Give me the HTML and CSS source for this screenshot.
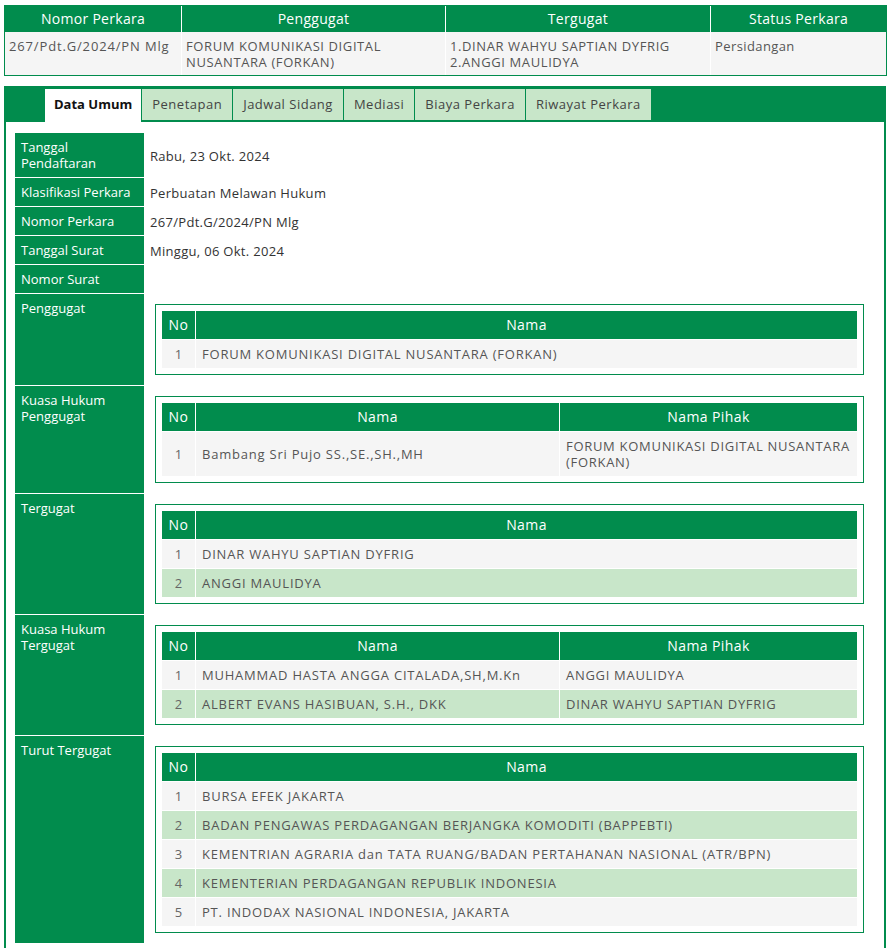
FILE: index.html
```html
<!DOCTYPE html>
<html lang="id">
<head>
<meta charset="utf-8">
<title>Detil Perkara</title>
<link rel="stylesheet" href="styles.css">
</head>
<body>
<table class="summary">
  <colgroup>
    <col class="s1"><col class="s2"><col class="s3"><col class="s4">
  </colgroup>
  <thead>
    <tr><th>Nomor Perkara</th><th>Penggugat</th><th>Tergugat</th><th>Status Perkara</th></tr>
  </thead>
  <tbody>
    <tr>
      <td class="num">267/Pdt.G/2024/PN Mlg</td>
      <td class="caps">FORUM KOMUNIKASI DIGITAL NUSANTARA (FORKAN)</td>
      <td class="caps">1.DINAR WAHYU SAPTIAN DYFRIG<br>2.ANGGI MAULIDYA</td>
      <td>Persidangan</td>
    </tr>
  </tbody>
</table>

<div class="panel">
  <div class="tabs">
    <div class="tab active">Data Umum</div>
    <div class="tab">Penetapan</div>
    <div class="tab">Jadwal Sidang</div>
    <div class="tab">Mediasi</div>
    <div class="tab">Biaya Perkara</div>
    <div class="tab">Riwayat Perkara</div>
  </div>
  <div class="content">
    <table class="info">
      <tr><th>Tanggal Pendaftaran</th><td>Rabu, 23 Okt. 2024</td></tr>
      <tr><th>Klasifikasi Perkara</th><td>Perbuatan Melawan Hukum</td></tr>
      <tr><th>Nomor Perkara</th><td>267/Pdt.G/2024/PN Mlg</td></tr>
      <tr><th>Tanggal Surat</th><td>Minggu, 06 Okt. 2024</td></tr>
      <tr><th>Nomor Surat</th><td></td></tr>
      <tr>
        <th>Penggugat</th>
        <td class="boxcell">
          <div class="box">
            <table class="inner">
              <tr><th class="no">No</th><th>Nama</th></tr>
              <tr><td class="no">1</td><td>FORUM KOMUNIKASI DIGITAL NUSANTARA (FORKAN)</td></tr>
            </table>
          </div>
        </td>
      </tr>
      <tr>
        <th>Kuasa Hukum Penggugat</th>
        <td class="boxcell">
          <div class="box">
            <table class="inner">
              <tr><th class="no">No</th><th>Nama</th><th class="pihak">Nama Pihak</th></tr>
              <tr><td class="no">1</td><td>Bambang Sri Pujo SS.,SE.,SH.,MH</td><td class="pihak">FORUM KOMUNIKASI DIGITAL NUSANTARA (FORKAN)</td></tr>
            </table>
          </div>
        </td>
      </tr>
      <tr>
        <th>Tergugat</th>
        <td class="boxcell">
          <div class="box">
            <table class="inner">
              <tr><th class="no">No</th><th>Nama</th></tr>
              <tr><td class="no">1</td><td>DINAR WAHYU SAPTIAN DYFRIG</td></tr>
              <tr><td class="no">2</td><td>ANGGI MAULIDYA</td></tr>
            </table>
          </div>
        </td>
      </tr>
      <tr>
        <th>Kuasa Hukum Tergugat</th>
        <td class="boxcell">
          <div class="box">
            <table class="inner">
              <tr><th class="no">No</th><th>Nama</th><th class="pihak">Nama Pihak</th></tr>
              <tr><td class="no">1</td><td>MUHAMMAD HASTA ANGGA CITALADA,SH,M.Kn</td><td class="pihak">ANGGI MAULIDYA</td></tr>
              <tr><td class="no">2</td><td>ALBERT EVANS HASIBUAN, S.H., DKK</td><td class="pihak">DINAR WAHYU SAPTIAN DYFRIG</td></tr>
            </table>
          </div>
        </td>
      </tr>
      <tr>
        <th>Turut Tergugat</th>
        <td class="boxcell">
          <div class="box">
            <table class="inner">
              <tr><th class="no">No</th><th>Nama</th></tr>
              <tr><td class="no">1</td><td>BURSA EFEK JAKARTA</td></tr>
              <tr><td class="no">2</td><td>BADAN PENGAWAS PERDAGANGAN BERJANGKA KOMODITI (BAPPEBTI)</td></tr>
              <tr><td class="no">3</td><td>KEMENTRIAN AGRARIA dan TATA RUANG/BADAN PERTAHANAN NASIONAL (ATR/BPN)</td></tr>
              <tr><td class="no">4</td><td>KEMENTERIAN PERDAGANGAN REPUBLIK INDONESIA</td></tr>
              <tr><td class="no">5</td><td>PT. INDODAX NASIONAL INDONESIA, JAKARTA</td></tr>
            </table>
          </div>
        </td>
      </tr>
    </table>
  </div>
</div>
</body>
</html>
```

FILE: styles.css
```css
* { box-sizing: border-box; }

body {
  margin: 0;
  background: #ffffff;
  font-family: "Open Sans", "DejaVu Sans", sans-serif;
  font-size: 13px;
  line-height: 16px;
  color: #444;
}

/* ---- summary table ---- */
.summary {
  margin: 5px 0 0 4px;
  width: 883px;
  table-layout: fixed;
  border-collapse: separate;
  border-spacing: 0;
  border: 1px solid #018c4d;
}
.summary .s1 { width: 176px; }
.summary .s2 { width: 264px; }
.summary .s3 { width: 265px; }
.summary .s4 { width: 176px; }
.summary th {
  background: #018c4d;
  color: #fff;
  font-weight: normal;
  font-size: 14px;
  padding: 5px 4px;
  text-align: center;
  letter-spacing: 0.3px;
}
.summary th + th,
.summary td + td { border-left: 1px solid #fff; }
.summary td {
  background: #f5f5f5;
  color: #555;
  vertical-align: top;
  padding: 6px 4px 5px 4px;
  letter-spacing: 0.4px;
}
.summary td.num { letter-spacing: 0.85px; }
.summary td.caps { letter-spacing: 0.6px; }

/* ---- panel ---- */
.panel {
  margin: 10px 0 0 4px;
  width: 882px;
  border: 2px solid #018c4d;
  border-top: 0;
  background: #fff;
}
.tabs {
  display: flex;
  gap: 1px;
  background: #018c4d;
  padding: 3px 0 2px 39px;
}
.tab {
  background: #c8e6c9;
  color: #444;
  padding: 7px 10px 8px;
  letter-spacing: 0.5px;
  white-space: nowrap;
}
.tab.active {
  background: #fff;
  color: #111;
  font-weight: bold;
  letter-spacing: 0;
  padding: 7px 9px 10px;
  margin-bottom: -2px;
}

.content {
  padding: 11px 10px 10px 9px;
}

/* ---- info table ---- */
.info {
  width: 100%;
  border-collapse: separate;
  border-spacing: 0;
}
.info > tbody > tr > th {
  width: 130px;
  background: #018c4d;
  color: #fff;
  font-weight: normal;
  text-align: left;
  vertical-align: top;
  padding: 6px 6px;
  line-height: 16px;
  border-bottom: 1px solid #fff;
  border-right: 1px solid #fff;
}
.info > tbody > tr > td {
  vertical-align: middle;
  padding: 6px 5px;
  line-height: 16px;
  color: #333;
  letter-spacing: 0.3px;
}
.info > tbody > tr > td.boxcell {
  padding: 10px 10px 11px 10px;
  letter-spacing: 0;
}

.box {
  border: 1px solid #018c4d;
  padding: 6px;
}

/* ---- inner tables ---- */
.inner {
  width: 100%;
  border-collapse: separate;
  border-spacing: 0;
}
.inner th {
  background: #018c4d;
  color: #fff;
  font-weight: normal;
  font-size: 14px;
  padding: 6px;
  line-height: 16px;
  text-align: center;
  letter-spacing: 0.4px;
}
.inner th + th,
.inner td + td { border-left: 1px solid #fff; }
.inner th.no { width: 33px; }
.inner th.pihak { width: 298px; }
.inner td {
  border-top: 1px solid #fff;
  padding: 6px 6px;
  line-height: 16px;
  color: #555;
  letter-spacing: 0.78px;
  vertical-align: middle;
  text-align: left;
}
.inner td.pihak {
  padding-right: 0;
  letter-spacing: 0.7px;
}
.inner td.no {
  text-align: center;
  color: #666;
  letter-spacing: 0;
}
.inner tr:nth-child(even) td { background: #f5f5f5; }
.inner tr:nth-child(odd) td { background: #c8e6c9; }
```
